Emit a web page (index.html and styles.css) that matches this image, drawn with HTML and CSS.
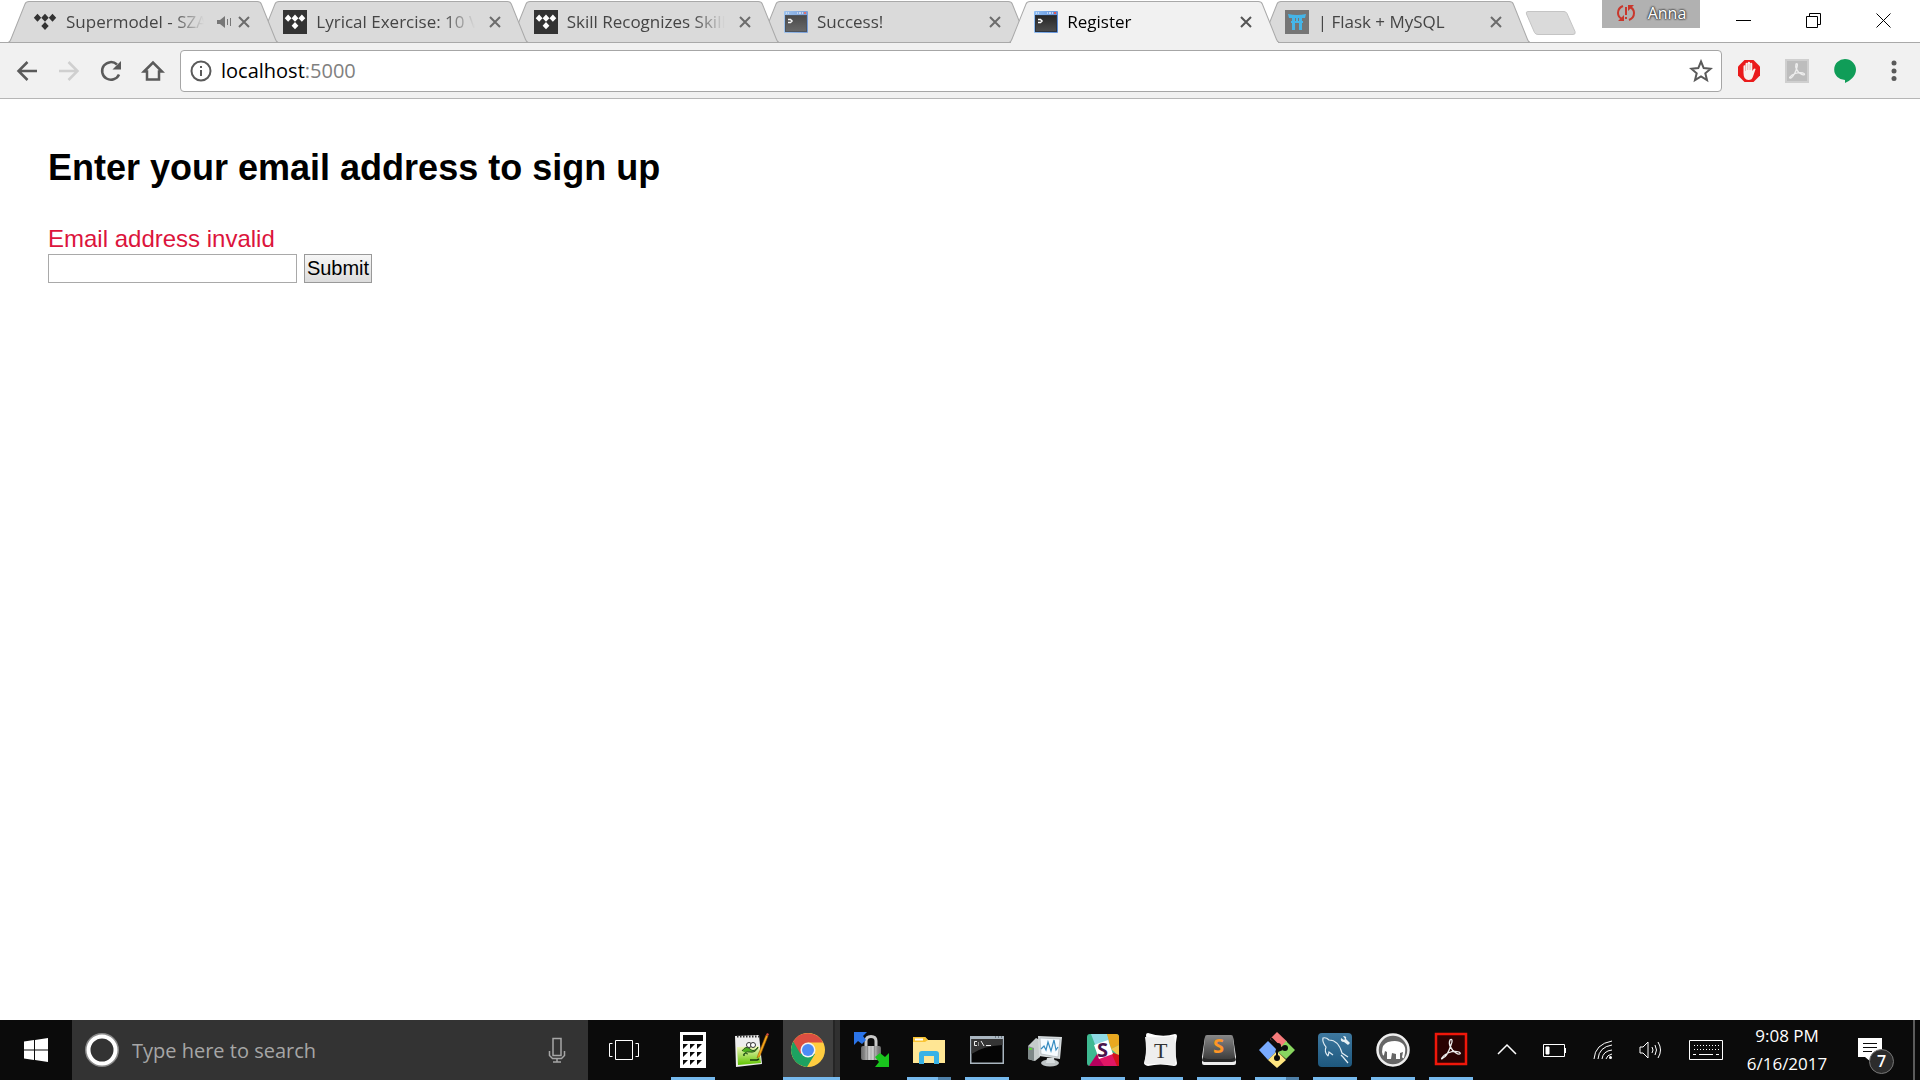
FILE: index.html
```html
<!DOCTYPE html>
<html lang="en">
<head>
<meta charset="utf-8">
<title>Register</title>
<link rel="stylesheet" href="styles.css">
</head>
<body>
<svg class="sprite" aria-hidden="true">
  <defs>
    <linearGradient id="titlebar" x1="0" y1="0" x2="1" y2="0"><stop offset="0" stop-color="#8fbdf2"/><stop offset="1" stop-color="#5f8fd8"/></linearGradient>
    <linearGradient id="screen" x1="0" y1="0" x2="0" y2="1"><stop offset="0" stop-color="#262626"/><stop offset="1" stop-color="#4c4c4c"/></linearGradient>
    <linearGradient id="metal" x1="0" y1="0" x2="1" y2="0"><stop offset="0" stop-color="#666"/><stop offset=".5" stop-color="#ddd"/><stop offset="1" stop-color="#666"/></linearGradient>
    <linearGradient id="key" x1="0" y1="0" x2="0" y2="1"><stop offset="0" stop-color="#888"/><stop offset="1" stop-color="#3a3a3a"/></linearGradient>
    <linearGradient id="sea" x1="0" y1="0" x2="0" y2="1"><stop offset="0" stop-color="#3e789f"/><stop offset="1" stop-color="#1e587e"/></linearGradient>
    <linearGradient id="grass" x1="0" y1="0" x2="0" y2="1"><stop offset="0" stop-color="#f4f8c0"/><stop offset="1" stop-color="#5fc400"/></linearGradient>
  </defs>
  <symbol id="tab-shape" viewBox="0 0 270 43" preserveAspectRatio="none">
    <path d="M0 42.500 Q2 42 3 39 L17 4 Q18 1.500 21 1.500 H249 Q252 1.500 253 4 L267 39 Q268 42 270 42.500 Z"/>
  </symbol>
  <symbol id="tidal" viewBox="0 0 24 24">
    <path d="M4.500 3.800 8.200 7.800 4.500 11.800.8 7.800ZM12 3.800l3.700 4-3.700 4-3.700-4ZM19.500 3.800l3.700 4-3.700 4-3.700-4ZM12 12l3.700 4L12 20l-3.700-4Z"/>
  </symbol>
  <symbol id="close" viewBox="0 0 24 24"><path d="M7 7 17 17M17 7 7 17" fill="none" stroke="currentColor" stroke-width="2"/></symbol>
  <symbol id="console" viewBox="0 0 24 24">
    <rect y="1" width="24" height="22" rx="1" fill="url(#titlebar)"/>
    <path d="M2 3h1m1 0h1m8 0h1" stroke="#fff" stroke-width="1"/>
    <path d="M15 3h2m1 0h1" stroke="#dce8fb" stroke-width="1.500"/><rect x="20" y="2" width="2" height="2" fill="#e25555"/>
    <rect x="1.500" y="5.500" width="21" height="16" fill="url(#screen)" stroke="#2b3340"/>
    <path d="M4 9.500h2.500L8 11 6.500 12.500H4" fill="none" stroke="#fff" stroke-width="1.500"/>
  </symbol>
</svg>

<div class="desktop">
  <header class="browser">
    <div class="tabstrip">
      <nav class="tabs" aria-label="Tabs">
        <div class="tab">
          <svg class="tab-bg"><use href="#tab-shape"/></svg>
          <svg class="favicon"><use href="#tidal"/></svg>
          <span class="tab-title">Supermodel - SZA</span>
          <svg class="sound" viewBox="0 0 16 12"><path d="M1 4h3l5-4v12L4 8H1Z"/><path d="M11.500 3v6M14.500 2v8" stroke="currentColor"/></svg>
          <button class="tab-close" aria-label="Close tab"><svg><use href="#close"/></svg></button>
        </div>
        <div class="tab">
          <svg class="tab-bg"><use href="#tab-shape"/></svg>
          <svg class="favicon tile"><use href="#tidal"/></svg>
          <span class="tab-title">Lyrical Exercise: 10 V</span>
          <button class="tab-close" aria-label="Close tab"><svg><use href="#close"/></svg></button>
        </div>
        <div class="tab">
          <svg class="tab-bg"><use href="#tab-shape"/></svg>
          <svg class="favicon tile"><use href="#tidal"/></svg>
          <span class="tab-title">Skill Recognizes Skill</span>
          <button class="tab-close" aria-label="Close tab"><svg><use href="#close"/></svg></button>
        </div>
        <div class="tab">
          <svg class="tab-bg"><use href="#tab-shape"/></svg>
          <svg class="favicon faded"><use href="#console"/></svg>
          <span class="tab-title">Success!</span>
          <button class="tab-close" aria-label="Close tab"><svg><use href="#close"/></svg></button>
        </div>
        <div class="tab active">
          <svg class="tab-bg"><use href="#tab-shape"/></svg>
          <svg class="favicon"><use href="#console"/></svg>
          <span class="tab-title">Register</span>
          <button class="tab-close" aria-label="Close tab"><svg><use href="#close"/></svg></button>
        </div>
        <div class="tab">
          <svg class="tab-bg"><use href="#tab-shape"/></svg>
          <svg class="favicon" viewBox="0 0 24 24"><path d="M0 0h24v24H0Z" fill="#757575"/><path d="M3 4q9 2 18 0l-1 4h-3v3h1v2h-1v7h-3v-7h-4v7H7v-7H6v-2h1V8H4ZM10 8v3h1V8Zm3 0v3h1V8Z" fill="#45b5e8"/></svg>
          <span class="tab-title">| Flask + MySQL</span>
          <button class="tab-close" aria-label="Close tab"><svg><use href="#close"/></svg></button>
        </div>
      </nav>
      <button class="new-tab" aria-label="New tab">
        <svg viewBox="0 0 52 26"><path d="M3 1.500H39Q41 1.500 42 3.500L50 21.500Q51 24.500 48 24.500H13Q10.500 24.500 9.500 22.500L1.500 4Q.5 1.500 3 1.500Z" fill="#dadada" stroke="#c4c4c4"/></svg>
      </button>
      <div class="window-controls">
        <button class="profile">
          <svg viewBox="0 0 20 18"><g fill="none" stroke="#c9372c" stroke-width="2"><path d="M7 2Q2 4 2 9q0 4 4 6M13 16q5-2 5-7 0-4-4-6"/><path d="M10 3v8M10 13v2"/></g><path d="M2 17h6v-6ZM18 1h-6v6Z" fill="#c9372c"/></svg>
          <span>Anna</span>
        </button>
        <button class="win-btn" aria-label="Minimize"><svg viewBox="0 0 16 16"><path d="M0 7.500H15"/></svg></button>
        <button class="win-btn" aria-label="Restore"><svg viewBox="0 0 16 16"><path d="M.5 3.500H11.500V14.500H.5ZM3.500 3V.5H14.500V11.500H12"/></svg></button>
        <button class="win-btn" aria-label="Close"><svg viewBox="0 0 16 16"><path d="M.5.5l14 14M14.500.5l-14 14"/></svg></button>
      </div>
    </div>

    <div class="toolbar">
      <button class="nav-btn" aria-label="Back"><svg viewBox="0 0 24 24"><path d="M22 12H4M12.500 3 3.500 12l9 9"/></svg></button>
      <button class="nav-btn disabled" aria-label="Forward" disabled><svg viewBox="0 0 24 24"><path d="M2 12H20M11.500 3l9 9-9 9"/></svg></button>
      <button class="nav-btn" aria-label="Reload"><svg viewBox="0 0 24 24"><path d="M20 15.500A8.800 8.800 0 1 1 18 5.500"/><path d="M22 2v8.500h-8.500Z" fill="currentColor" stroke="none"/></svg></button>
      <button class="nav-btn" aria-label="Home"><svg viewBox="0 0 24 24"><path d="M3 12.500 12 3.500l9 9H18V20.500H6V12.500Z"/></svg></button>
      <div class="omnibox">
        <svg class="info" viewBox="0 0 24 24"><circle cx="12" cy="12" r="9.500" fill="none" stroke="currentColor" stroke-width="2"/><path d="M11 7h2v2h-2ZM11 11h2v6h-2Z"/></svg>
        <a class="url" href="#">localhost<span>:5000</span></a>
        <svg class="star" viewBox="0 0 24 24"><path d="M12 2.500l2.700 6.600 7 .6-5.400 4.600 1.700 6.800-6-3.700-6 3.700 1.700-6.800L2.300 9.700l7-.6Z"/></svg>
      </div>
      <div class="extensions">
        <button aria-label="Ad blocker"><svg viewBox="0 0 24 24"><path d="M7.500 1h9L23 7.500v9L16.500 23h-9L1 16.500v-9Z" fill="#ea1b1b"/><path d="M6.500 14V7.500q0-1.200 1-1.200t1 1.200V5q0-1.200 1.100-1.200T10.700 5V4q0-1.300 1.200-1.300T13.100 4v1q0-1.200 1.100-1.200T15.300 5v7l1.400-2q1-1 1.900 0l-2.600 7.500q-1 3.500-4.500 3.500-5 0-5-7Z" fill="#f7f2ee"/><path d="M8.500 7v5M10.700 5v6M13.100 5v6" stroke="#dda9a3" stroke-width=".7"/></svg></button>
        <button aria-label="PDF"><svg viewBox="0 0 24 24"><path d="M0 0h24v24H0Z" fill="#cfcfcf"/><path d="M2 2h20v20H2Z" fill="#bdbdbd"/><path d="M5 18c2-3 8-5 13-4 3 1 1 3-2 1-4-2-6-7-5-10 1-1 2 0 1 3-1 5-4 10-6 11-1 0-2 0-1-1Z" fill="none" stroke="#eee" stroke-width="1.300"/></svg></button>
        <button aria-label="Hangouts"><svg viewBox="0 0 24 24"><path d="M12 0a11 10.800 0 0 1 11 10.800C23 17 17 22 12 24v-3A10.700 10.400 0 0 1 12 0Z" fill="#109d58"/></svg></button>
      </div>
      <button class="menu" aria-label="Menu"><svg viewBox="0 0 6 24"><circle cx="3" cy="4" r="2.500"/><circle cx="3" cy="12" r="2.500"/><circle cx="3" cy="19.500" r="2.500"/></svg></button>
    </div>
  </header>

  <main class="page">
    <h1>Enter your email address to sign up</h1>
    <form class="signup">
      <label class="error" for="email">Email address invalid</label>
      <div class="fields">
        <input id="email" type="text" name="email">
        <button type="submit">Submit</button>
      </div>
    </form>
  </main>

  <footer class="taskbar">
    <button class="start" aria-label="Start"><svg viewBox="0 0 24 24"><path d="M0 3.500 10 2v9.500H0ZM11 1.900 24 0v11.500H11ZM0 12.500h10V22L0 20.500ZM11 12.500h13V24l-13-1.900Z"/></svg></button>
    <div class="search">
      <svg class="cortana" viewBox="0 0 34 34"><circle cx="17" cy="17" r="16" fill="none" stroke="#8a8a8a" stroke-width="2"/><circle cx="17" cy="17" r="13.500" fill="none" stroke="#fff" stroke-width="4"/></svg>
      <input type="text" aria-label="Search" placeholder="Type here to search">
      <svg class="mic" viewBox="0 0 18 26"><path d="M5 1.500h8v17H5ZM1.500 14v4.500l3 3h9l3-3V14M9 22v3M5 25h8"/></svg>
    </div>
    <button class="task-view" aria-label="Task view"><svg viewBox="0 0 32 22"><path d="M7.500 1.500h17v19h-17ZM4.500 4.500h-3v13h3M27.500 4.500h3v13h-3"/></svg></button>
    <nav class="apps" aria-label="Taskbar">
      <button class="app open" aria-label="Calculator"><svg viewBox="0 0 36 36"><path d="M5 0h26v36H5Z" fill="#fff"/><path d="M8 3h20v6H8Z" fill="#0b0b0b"/><path d="M8 12h5l-5 5ZM15 12h5l-5 5ZM22 12h5l-5 5ZM8 20h5l-5 5ZM15 20h5l-5 5ZM22 20h5l-5 5ZM8 28h5l-5 5ZM15 28h5l-5 5ZM22 28h5l-5 5Z" fill="#0b0b0b"/></svg></button>
      <button class="app" aria-label="Notepad++"><svg viewBox="0 0 36 36"><path d="M2 4 26 3l3 29L3 35Z" fill="#eee"/><path d="M4 15l22-1 2 17L5 33Z" fill="url(#grass)"/><path d="M4 4.500h22" stroke="#333" stroke-width="2" stroke-dasharray="1.500 1.500"/><path d="M9 19q4-6 8-2t8-2q-2 6-8 5T11 24q-2-4 4-2" fill="#4fae20" stroke="#29561b" stroke-width="1"/><circle cx="16" cy="13" r="2.500" fill="#fff" stroke="#333"/><circle cx="20" cy="13" r="2.500" fill="#fff" stroke="#333"/><path d="M17 28h7l2-1" stroke="#183c10" stroke-width="1.500" fill="none"/><path d="M25 23 33 3l2 1-8 20-3 2Z" fill="#f6a81b" stroke="#9a5a08" stroke-width=".6"/><path d="M33 3l1-2 2 1-1 2Z" fill="#d94c3f"/></svg></button>
      <button class="app open current" aria-label="Chrome"><svg viewBox="0 0 36 36"><circle cx="18" cy="18" r="17" fill="#ffcd40"/><path d="M18 18 3.300 9.500A17 17 0 0 0 17 35l8-13Z" fill="#1da261"/><path d="M3.300 9.500A17 17 0 0 1 33 10.500H18l-7.500 11.500Z" fill="#dc4e41"/><circle cx="18" cy="18" r="7.500" fill="#f3f3f3"/><circle cx="18" cy="18" r="6" fill="#4c8bf5"/></svg></button>
      <button class="app" aria-label="Secure transfer"><svg viewBox="0 0 36 36"><path d="M13 15V9q0-4.500 5-4.500T23 9v6" fill="none" stroke="#c9c9c9" stroke-width="3"/><rect x="8" y="14" width="20" height="14" rx="2" fill="url(#metal)"/><path d="M11 14v14M14.500 14v14M18 14v14M21.500 14v14M25 14v14" stroke="#777" stroke-width=".6"/><path d="M1 0h13l-4 4 3 4-4 4-4-3-4 4Z" fill="#2b74e8"/><path d="M36 35V21l-4 4-5-4-5 4 4 5-4 5Z" fill="#19c51d"/></svg></button>
      <button class="app open stacked" aria-label="File Explorer"><svg viewBox="0 0 36 36"><path d="M2 5h12l3 3h17v23H2Z" fill="#ffe694"/><path d="M2 5h12l3 3-3 2H2Z" fill="#f9c433"/><path d="M4 6.500h8v2H4Z" fill="#fff"/><path d="M8 32V22q0-3 3-3h14q3 0 3 3v10h-5v-8H13v8Z" fill="#38b2e6"/></svg></button>
      <button class="app open" aria-label="Command Prompt"><svg viewBox="0 0 36 36"><path d="M1 4h34v28H1Z" fill="#aab6c0"/><path d="M2.500 7h31v23.500h-31Z" fill="#050505"/><path d="M2.500 7h31v6Q14 14 2.500 22Z" fill="#353535"/><path d="M8 9.500H5.500v4H8M9.500 10.500v1M9.500 12.500v1M12 9l3 5M17 13.500h5" stroke="#eee" fill="none"/><path d="M26 5h1M29 5h1M32 5h1" stroke="#36414a"/></svg></button>
      <button class="app" aria-label="System Monitor"><svg viewBox="0 0 36 36"><path d="M1 14l8-8 4 2v17l-5 4-7-2Z" fill="#c5cbcb"/><path d="M1 14l6 2v13l-6-2Z" fill="#7f8989"/><path d="M2 17h3" stroke="#5ad53a" stroke-width="2"/><path d="M11 4l24 1-2 22-21-3Z" fill="#d5dadc"/><path d="M13 6l20 1-2 18-17-3Z" fill="#f6fbff" stroke="#a1abb0" stroke-width=".6"/><path d="M14 17l3-3 2 4 2-8 3 9 3-11 2 10 2-3" stroke="#358bc0" fill="none" stroke-width="1.200"/><ellipse cx="23" cy="31" rx="9" ry="3.500" fill="#bfc4c6"/><path d="M20 26h7l1 5h-9Z" fill="#d8dddf"/></svg></button>
      <button class="app open" aria-label="Slack"><svg viewBox="0 0 36 36"><rect x="2" y="2" width="32" height="32" rx="3" fill="#3eb991"/><path d="M6 2h16l3 8-14 5Z" fill="#8fdbe5"/><path d="M22 2h9q3 0 3 3v8l-8 4Z" fill="#e9a820"/><path d="M34 13v11l-8-7Z" fill="#f2c54a"/><path d="M4 34l8-12h9l4 12Z" fill="#b8005e"/><path d="M13 25l14-4 6 13H19Z" fill="#e01765"/><path d="M26 20l8 3v11h-2Z" fill="#d5131a"/><path d="M9 13l14-5 5 14-14 5Z" fill="#fff"/><text x="12" y="25" class="slack-s">S</text></svg></button>
      <button class="app open" aria-label="Typora"><svg viewBox="0 0 36 36"><path d="M5 1q14 5 27 1 2 0 2 2-3 14 0 27 0 3-3 3-14-3-26 0-4-1-4-3Q5 17 3 3 3 1 5 1Z" fill="#fff"/><path d="M2 5q15 1 29-1 3 13 1 29-15-2-28-1-3 0-2-4Q4 18 2 5Z" fill="#eee"/><text x="11" y="26" class="typora-t">T</text></svg></button>
      <button class="app open" aria-label="Sublime Text"><svg viewBox="0 0 36 36"><path d="M4 5h28l3 20v6q0 2-2 2H3q-2 0-2-2v-6Z" fill="#eee"/><path d="M6 3h24q2 0 2 2l2 20q0 3-3 3H5q-3 0-3-3L4 5q0-2 2-2Z" fill="url(#key)"/><path d="M2 25q2 2 5 2h22q3 0 5-2l1 3q-1 2-4 2H5q-4 0-4-2Z" fill="#292929"/><text x="12" y="21" class="sublime-s">S</text></svg></button>
      <button class="app open stacked" aria-label="Git"><svg viewBox="0 0 36 36"><path d="M18 0 28 9.500 23 15l-4-2-8-6Z" fill="#f67b7b"/><path d="M0 18 9 9l8 8-1 4-7 7Z" fill="#78aaff"/><path d="M27 9l9 9-9 9-8-7 5-2-2-3Z" fill="#88d65f"/><path d="M18 19l9 9-9 8-9-8Z" fill="#ffe680"/><path d="M12 6l8 8M18 13v14M18 18l7-3" stroke="#0b0b0b" stroke-width="2"/><circle cx="19" cy="14" r="3" fill="#0b0b0b"/><circle cx="18" cy="26" r="3" fill="#0b0b0b"/><circle cx="26" cy="16" r="3" fill="#0b0b0b"/></svg></button>
      <button class="app open" aria-label="MySQL Workbench"><svg viewBox="0 0 36 36"><rect x="1" y="1" width="34" height="34" rx="4" fill="url(#sea)"/><path d="M11 24Q7 20 9 15 5 10 6 6q3-1 6 2c7 0 11 6 13 13l6 4M26 25l5 6M26 25l-2-2M11 24l1-4 4 3" fill="none" stroke="#e2edf3" stroke-width="1.200"/><path d="M26 4l2 3-1 1-3-2q-1 4 3 4l4 3 2-2-4-4q1-3-3-3" fill="#e7f0f4"/></svg></button>
      <button class="app open" aria-label="MAMP"><svg viewBox="0 0 36 36"><circle cx="18" cy="18" r="15.500" fill="#666" stroke="#eee" stroke-width="2.500"/><path d="M7 20q0-8 6-10 10-3 15 2 3 3 2 9l-1 5q-1 1-2-1l1-5-3 1v6h-4v-5l-4-1-1 6h-4v-7l-2-1-1 4q-1 2-2-3Z" fill="#fff"/></svg></button>
      <button class="app open" aria-label="Acrobat Reader"><svg viewBox="0 0 36 36"><path d="M3 2h30v30H3Z" fill="#2a0202" stroke="#f0170a" stroke-width="2.500"/><path d="M9 26c2-4 10-8 17-6 3 2 0 3-3 1-5-3-8-9-6-13 2-2 3 1 1 5-2 6-5 12-8 13-1 1-2 1-1 0Z" fill="none" stroke="#eee" stroke-width="1.300"/></svg></button>
    </nav>
    <div class="tray">
      <button aria-label="Show hidden icons"><svg width="20" height="20" viewBox="0 0 20 20"><path d="M1 14 10 5l9 9" stroke-width="1.500"/></svg></button>
      <button aria-label="Battery"><svg width="24" height="24" viewBox="0 0 24 24"><path d="M.5 6.500H21.500V18.500H.5ZM22.500 10v5"/><path d="M3 9h3v7H3Z" fill="#fff"/></svg></button>
      <button aria-label="Wi-Fi"><svg width="20" height="20" viewBox="0 0 20 20"><path d="M1 19Q2 4 19 1M5 19Q6 7 19 5M9 19Q10 11 19 10M13 19q1-4 6-5"/><circle cx="17.500" cy="17.500" r="1.500" fill="#fff" stroke="none"/></svg></button>
      <button aria-label="Volume"><svg width="24" height="20" viewBox="0 0 24 20"><path d="M1 7h3l5-5v16l-5-5H1ZM13 7q2 3 0 6M16 5q3 5 0 10M19 2q5 8 0 16"/></svg></button>
      <button aria-label="Touch keyboard"><svg width="34" height="20" viewBox="0 0 34 20"><path d="M.5.5H33.500V19.500H.5Z"/><path d="M5 5.500H30M5 9.500H30" stroke-dasharray="1 2"/><path d="M4 14.500h3M10 14.500H24M27 14.500h3"/></svg></button>
      <div class="clock"><time>9:08 PM</time><time>6/16/2017</time></div>
      <button class="notices" aria-label="Notifications"><svg width="24" height="24" viewBox="0 0 24 24"><path d="M0 0h24v19H13v5l-6-5H0Z" fill="#fff" stroke="none"/><path d="M5 5.500h14M5 9.500h14M5 13.500h9" stroke="#0b0b0b"/></svg><span class="badge">7</span></button>
    </div>
  </footer>
</div>
</body>
</html>
```
FILE: styles.css
```css
* { box-sizing: border-box; }

body {
  margin: 0;
  background: #fff;
  font-family: "Open Sans", "Noto Sans", sans-serif;
}

button {
  border: 0;
  padding: 0;
  background: none;
  font: inherit;
  color: inherit;
  display: flex;
  align-items: center;
  justify-content: center;
}

svg { display: block; flex: none; }

.sprite { position: absolute; width: 0; height: 0; }

.desktop {
  min-height: 100vh;
  display: flex;
  flex-direction: column;
}

/* Tab strip */
.tabstrip {
  display: flex;
  height: 43px;
  padding-left: 8px;
  border-bottom: 1px solid #a9a9a9;
  background: #fff;
}

.tabs {
  display: flex;
  flex: 0 1 1502px;
  min-width: 0;
}

.tab {
  position: relative;
  flex: 1;
  min-width: 0;
  height: 43px;
  display: flex;
  align-items: center;
  padding: 0 2px 0 25px;
  font-size: 17px;
  color: #454545;
}

.tab:nth-child(1) { z-index: 6; }
.tab:nth-child(2) { z-index: 5; }
.tab:nth-child(3) { z-index: 4; }
.tab:nth-child(4) { z-index: 3; }
.tab:nth-child(6) { z-index: 1; }
.tab.active { z-index: 7; color: #000; }

.tab-bg {
  position: absolute;
  left: 0;
  top: 0;
  z-index: -1;
  width: calc(100% + 20px);
  height: 43px;
  fill: #dadada;
  stroke: #a9a9a9;
}

.active .tab-bg { fill: #f1f1f1; }

.active::after {
  content: "";
  position: absolute;
  left: 2px;
  right: -18px;
  bottom: 0;
  height: 1px;
  background: #f1f1f1;
}

.favicon { width: 24px; height: 24px; fill: #333; }
.favicon.tile { background: #333; fill: #fff; padding: 1px; }
.favicon.faded { opacity: .8; }

.tab-title {
  flex: 1;
  min-width: 0;
  margin: 0 8px 0 9px;
  overflow: hidden;
  white-space: nowrap;
  line-height: 24px;
  -webkit-mask-image: linear-gradient(to left, transparent, #000 32px);
  mask-image: linear-gradient(to left, transparent, #000 32px);
}

.sound { width: 16px; height: 12px; margin: 0 -4px 0 4px; fill: #777; color: #777; }
.tab-close { width: 24px; height: 24px; color: #6c6c6c; }
.sound + .tab-close { margin-left: 0; }
.sound { margin-right: 0; }
.active .tab-close { color: #555; }
.tab-close svg { width: 24px; height: 24px; }

.new-tab { width: 52px; height: 26px; margin: 10px auto 0 15px; }
.new-tab svg { width: 52px; height: 26px; }

.window-controls { display: flex; padding-right: 1px; }

.profile {
  height: 28px;
  width: 98px;
  margin-right: 9px;
  padding-bottom: 2px;
  gap: 12px;
  background: #b1b1b1;
  color: #fff;
  font-size: 16px;
  text-shadow: 0 0 2px #333, 0 0 2px #333, 0 0 2px #333;
}
.profile svg { width: 20px; height: 18px; }

.win-btn { width: 70px; height: 42px; }
.win-btn svg { width: 16px; height: 16px; fill: none; stroke: #000; }

/* Toolbar */
.toolbar {
  display: flex;
  align-items: center;
  height: 56px;
  padding: 0 23px 0 15px;
  background: #f1f1f1;
  border-bottom: 1px solid #b6b6b6;
  color: #5a5a5a;
}

.nav-btn { width: 24px; height: 24px; margin-right: 18px; color: #5a5a5a; }
.nav-btn svg { width: 24px; height: 24px; fill: none; stroke: currentColor; stroke-width: 2.5; }
.nav-btn.disabled { color: #cfcfcf; }

.omnibox {
  flex: 1;
  display: flex;
  align-items: center;
  height: 42px;
  margin: 0 15px 0 -3px;
  padding: 0 8px;
  background: #fff;
  border: 1px solid #a6a6a6;
  border-radius: 4px;
}

.info { width: 24px; height: 24px; fill: #5a5a5a; }
.url {
  flex: 1;
  margin-left: 8px;
  font-size: 20px;
  line-height: 28px;
  color: #000;
  text-decoration: none;
}
.url span { color: #808080; }
.star { width: 24px; height: 24px; fill: none; stroke: #5a5a5a; stroke-width: 2; }

.extensions { display: flex; gap: 24px; margin-right: 34px; }
.extensions button, .extensions svg { width: 24px; height: 24px; }
.menu svg { width: 6px; height: 24px; fill: #5a5a5a; }

/* Page */
.page {
  flex: 1;
  padding: 45px 48px;
  font-family: "Liberation Sans", Arial, sans-serif;
  font-size: 24px;
}

.page h1 { margin: 0 0 32px; font-size: 36px; line-height: 48px; }
.error { display: block; color: #dc143c; line-height: 30px; }
.fields { display: flex; gap: 7px; }

.fields input {
  width: 249px;
  height: 29px;
  border: 1px solid #a9a9a9;
  padding: 1px 4px;
  font: 20px "Liberation Sans", Arial, sans-serif;
}

.fields button {
  width: 68px;
  height: 29px;
  border: 1px solid #999;
  background: linear-gradient(#f6f6f6, #dcdcdc);
  font-size: 20px;
  color: #000;
}

/* Taskbar */
.taskbar {
  display: flex;
  height: 60px;
  background: #0b0b0b;
  color: #fff;
}

.start { width: 72px; }
.start svg { width: 24px; height: 24px; fill: #fff; }

.search {
  flex: 0 1 516px;
  display: flex;
  align-items: center;
  padding: 0 22px 0 13px;
  background: #333;
}

.cortana { width: 34px; height: 34px; }

.search input {
  flex: 1;
  min-width: 0;
  margin-left: 13px;
  padding: 0;
  border: 0;
  background: none;
  font: 20px "Open Sans", "Noto Sans", sans-serif;
  color: #fff;
}
.search input::placeholder { color: #a6a6a6; opacity: 1; }

.mic { width: 18px; height: 26px; fill: none; stroke: #a6a6a6; stroke-width: 1.5; }

.task-view { width: 72px; }
.task-view svg { width: 32px; height: 22px; fill: none; stroke: #fff; stroke-width: 1; }

.apps { display: flex; margin-left: 4px; }

.app { position: relative; width: 58px; height: 60px; }
.app svg { width: 36px; height: 36px; }

.slack-s { font: 700 20px "Open Sans", sans-serif; fill: #4a154b; }
.typora-t { font: 22px "Liberation Serif", serif; fill: #333; }
.sublime-s { font: 700 20px "Open Sans", sans-serif; fill: #ff9626; }

.app.open::after {
  content: "";
  position: absolute;
  left: 7px;
  right: 7px;
  bottom: 0;
  height: 3px;
  background: #76b9ed;
}
.app.stacked::after { background: linear-gradient(to right, #76b9ed 31px, #4f80a8 31px); }

.app.current {
  width: 57px;
  margin: 0 2px 0 3px;
  padding-right: 7px;
  background: linear-gradient(to right, #3f3f3f 50px, #252525 50px, #252525 52px, #303030 52px);
}
.app.current::after { left: 0; right: 0; }

.tray {
  display: flex;
  align-items: center;
  justify-content: flex-end;
  flex: 1;
  margin-right: 5px;
  border-right: 2px solid #5c5c5c;
}
.tray button { height: 60px; margin-right: 26px; }
.tray svg { fill: none; stroke: #fff; }

.clock {
  display: flex;
  flex-direction: column;
  align-items: center;
  width: 88px;
  margin-right: 27px;
  margin-left: -6px;
  font-size: 17px;
  line-height: 28px;
}

.tray .notices { position: relative; margin-right: 31px; }

.badge {
  position: absolute;
  left: 11px;
  top: 29px;
  width: 25px;
  height: 25px;
  border: 1px solid #777;
  border-radius: 50%;
  background: #2c2c2c;
  font-size: 16px;
  font-weight: 600;
  line-height: 23px;
  text-align: center;
}
```
